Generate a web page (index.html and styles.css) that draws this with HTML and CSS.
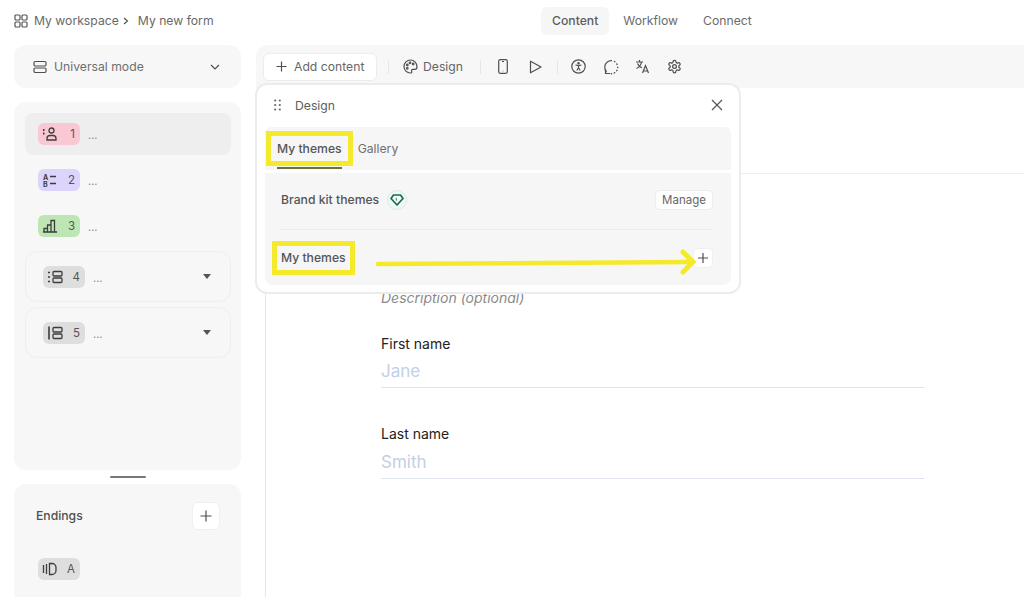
FILE: index.html
```html
<!DOCTYPE html>
<html lang="en">
<head>
  <meta charset="UTF-8">
  <title>My new form</title>
  <meta name="viewport" content="width=device-width, initial-scale=1">
  <link rel="stylesheet" href="styles.css">
</head>
<body>
<header class="topbar">
  <div class="crumbs">
    <svg class="grid-icon" width="14" height="14" viewBox="0 0 14 14"><rect x="1" y="1" width="5" height="5" rx="1"/><rect x="8" y="1" width="5" height="5" rx="1"/><rect x="1" y="8" width="5" height="5" rx="1"/><rect x="8" y="8" width="5" height="5" rx="1"/></svg>
    <span>My workspace</span>
    <svg class="crumb-sep" width="6" height="8" viewBox="0 0 6 8"><path d="M1 1l3.5 3L1 7"/></svg>
    <span class="crumb-form">My new form</span>
  </div>
  <nav class="tabs">
    <a class="tab active">Content</a>
    <a class="tab">Workflow</a>
    <a class="tab">Connect</a>
  </nav>
</header>

<div class="layout">
  <aside class="sidebar">
    <div class="mode-card">
      <svg class="ico" width="14" height="14" viewBox="0 0 14 14"><rect x="1" y="1.5" width="12" height="4.5" rx="1.2"/><rect x="1" y="8" width="12" height="4.5" rx="1.2"/></svg>
      <span class="mode-label">Universal mode</span>
      <svg class="ico chev" width="10" height="6" viewBox="0 0 10 6"><path d="M1 1l4 4 4-4"/></svg>
    </div>

    <div class="questions">
      <div class="q-row selected">
        <span class="badge pink">
          <svg class="ico dark" width="16" height="14" viewBox="0 0 16 14"><circle cx="9.5" cy="3.5" r="2.5"/><path d="M5 13v-1.5C5 9.5 6.500 8.500 8 8.500h3c1.500 0 3 1 3 3V13z"/><path d="M1 3h1.500M1 6.500h1.500" stroke-width="1.800"/></svg>
          <b>1</b>
        </span>
        <span class="dots">...</span>
      </div>
      <div class="q-row">
        <span class="badge purple">
          <svg class="ico dark" width="16" height="14" viewBox="0 0 16 14"><text class="mini" x="1" y="6.5">A</text><text class="mini" x="1" y="13.5">B</text><path d="M8 3.500h6M8 10.500h6"/></svg>
          <b>2</b>
        </span>
        <span class="dots">...</span>
      </div>
      <div class="q-row">
        <span class="badge green">
          <svg class="ico dark" width="16" height="14" viewBox="0 0 16 14"><path d="M1 13h14M2 13V9.500h3.500V13M5.500 13V6H9v7M9 13V1.500h3.500V13"/></svg>
          <b>3</b>
        </span>
        <span class="dots">...</span>
      </div>

      <div class="q-group">
        <span class="badge gray">
          <svg class="ico dark" width="16" height="14" viewBox="0 0 16 14"><rect x="6" y="1.500" width="9" height="4.500" rx="1"/><rect x="6" y="8" width="9" height="4.500" rx="1"/><path d="M1 2.500h2M1 7h2M1 11.500h2" stroke-width="1.600"/></svg>
          <b>4</b>
        </span>
        <span class="dots">...</span>
        <span class="caret"></span>
      </div>
      <div class="q-group">
        <span class="badge gray">
          <svg class="ico dark" width="16" height="14" viewBox="0 0 16 14"><rect x="6" y="1.500" width="9" height="4.500" rx="1"/><rect x="6" y="8" width="9" height="4.500" rx="1"/><path d="M2 .5v13" stroke-width="1.600"/></svg>
          <b>5</b>
        </span>
        <span class="dots">...</span>
        <span class="caret"></span>
      </div>
    </div>

    <div class="handle"></div>

    <div class="endings">
      <div class="endings-head">
        <span class="endings-title">Endings</span>
        <button class="plus-btn big">
          <svg class="ico" width="12" height="12" viewBox="0 0 12 12"><path d="M6 .5v11M.5 6h11"/></svg>
        </button>
      </div>
      <span class="badge gray ending-badge">
        <svg class="ico dark" width="16" height="14" viewBox="0 0 16 14"><path d="M1.500 3v8M4.500 2v10M7.500 1.500H10a4 4 0 014 4v3a4 4 0 01-4 4H7.500z"/></svg>
        <b>A</b>
      </span>
    </div>
  </aside>

  <main class="main">
    <div class="toolbar">
      <button class="add-btn">
        <svg class="ico" width="11" height="11" viewBox="0 0 11 11"><path d="M5.500 .5v10M.5 5.500h10"/></svg>
        Add content
      </button>
      <span class="sep first"></span>
      <span class="tool-design">
        <svg class="ico" width="15" height="15" viewBox="0 0 15 15"><path d="M7.500 1a6.500 6.500 0 000 13c1.200 0 1.600-.9 1.200-1.700-.5-1 .1-2 1.200-2h2c1.300 0 2.100-1 2.100-2.300C14 3.500 11 1 7.500 1z"/><circle cx="4.300" cy="6" r=".8"/><circle cx="7" cy="3.800" r=".8"/><circle cx="10.200" cy="5" r=".8"/><circle cx="4.300" cy="9.300" r=".8"/></svg>
        Design
      </span>
      <span class="sep"></span>
      <svg class="ico t-phone" width="10" height="15" viewBox="0 0 10 15"><rect x=".7" y=".7" width="8.600" height="13.600" rx="1.500"/><path d="M4 2.500h2M5 11.800v.4"/></svg>
      <svg class="ico t-play" width="13" height="14" viewBox="0 0 13 14"><path d="M1.500 1.200v11.600L12 7z" stroke-linejoin="round"/></svg>
      <span class="sep narrow"></span>
      <svg class="ico t-a11y" width="15" height="15" viewBox="0 0 15 15"><circle cx="7.500" cy="7.500" r="6.700"/><circle cx="7.500" cy="4.300" r=".7"/><path d="M4.500 6l3 .7 3-.7M7.500 6.700v2M7.500 8.700L5.800 11.500M7.500 8.700l1.700 2.800"/></svg>
      <svg class="ico t-loop" width="16" height="16" viewBox="0 0 16 16"><path d="M3.500 13C1 10 1.200 5.500 4 3.200 5.500 2 7 1.500 9 1.700"/><path d="M11.500 2.500l.3.2M13.800 5l.2.400M14.700 8.200v.4M13.900 11.300l-.2.4M11.700 13.700l-.4.2M8.600 14.700h-.4" stroke-width="1.400" stroke-linecap="round"/><path d="M2.500 10.500v4h4.500"/></svg>
      <svg class="ico t-lang" width="15" height="15" viewBox="0 0 15 15"><path d="M1 3h7M4.500 1v2M6.500 3C6 6 4 8.500 1.500 9.500M2.500 4.500C3.300 6.500 5 8 7 8.800M7.500 14l3-7.500 3 7.500M8.500 12h4"/></svg>
      <svg class="ico t-gear" width="15" height="15" viewBox="0 0 24 24"><path stroke-width="2" d="M12.220 2h-.44a2 2 0 0 0-2 2v.18a2 2 0 0 1-1 1.730l-.43.25a2 2 0 0 1-2 0l-.15-.08a2 2 0 0 0-2.730.73l-.22.38a2 2 0 0 0 .73 2.730l.15.1a2 2 0 0 1 1 1.720v.51a2 2 0 0 1-1 1.740l-.15.09a2 2 0 0 0-.73 2.730l.22.38a2 2 0 0 0 2.730.73l.15-.08a2 2 0 0 1 2 0l.43.25a2 2 0 0 1 1 1.730V20a2 2 0 0 0 2 2h.44a2 2 0 0 0 2-2v-.18a2 2 0 0 1 1-1.730l.43-.25a2 2 0 0 1 2 0l.15.08a2 2 0 0 0 2.730-.73l.22-.39a2 2 0 0 0-.73-2.730l-.15-.08a2 2 0 0 1-1-1.740v-.5a2 2 0 0 1 1-1.740l.15-.09a2 2 0 0 0 .73-2.730l-.22-.38a2 2 0 0 0-2.730-.73l-.15.08a2 2 0 0 1-2 0l-.43-.25a2 2 0 0 1-1-1.730V4a2 2 0 0 0-2-2z"/><circle stroke-width="2" cx="12" cy="12" r="3"/></svg>
    </div>

    <div class="canvas">
      <div class="canvas-head"></div>
      <form class="form">
        <p class="form-desc">Description (optional)</p>
        <div class="field">
          <label>First name</label>
          <div class="placeholder">Jane</div>
        </div>
        <div class="field">
          <label>Last name</label>
          <div class="placeholder">Smith</div>
        </div>
      </form>
    </div>
  </main>
</div>

<section class="panel">
  <div class="panel-head">
    <svg class="drag" width="7" height="12" viewBox="0 0 7 12"><circle cx="1.200" cy="1.500" r="1.100"/><circle cx="5.800" cy="1.500" r="1.100"/><circle cx="1.200" cy="6" r="1.100"/><circle cx="5.800" cy="6" r="1.100"/><circle cx="1.200" cy="10.500" r="1.100"/><circle cx="5.800" cy="10.500" r="1.100"/></svg>
    <span class="panel-title">Design</span>
    <svg class="ico close" width="12" height="12" viewBox="0 0 12 12"><path d="M1 1l10 10M11 1L1 11"/></svg>
  </div>
  <div class="panel-tabs">
    <span class="panel-tab on"><span class="marked tab-mark">My themes</span></span>
    <span class="panel-tab">Gallery</span>
  </div>
  <div class="panel-body">
    <div class="theme-row brand">
      <span>Brand kit themes</span>
      <span class="gem">
        <svg width="14" height="12" viewBox="0 0 14 12"><path d="M3.500 1h7L13 4.500 7 11 1 4.500z" fill="none" stroke="#1f6a54" stroke-width="1.700" stroke-linejoin="round"/><path d="M6.500 3.500L5.500 5l1.500 2.500z" fill="#1f6a54"/></svg>
      </span>
      <button class="manage">Manage</button>
    </div>
    <div class="theme-row mine">
      <span class="marked row-mark">My themes</span>
      <button class="plus-btn">
        <svg class="ico" width="10" height="10" viewBox="0 0 10 10"><path d="M5 0v10M0 5h10"/></svg>
      </button>
    </div>
  </div>
</section>

<svg class="arrow" width="325" height="30" viewBox="0 0 325 30">
  <path d="M2 17 L316 15" stroke-width="4.500"/>
  <path d="M307 5 L317 15 L307 25" stroke-width="5"/>
</svg>
</body>
</html>
```

FILE: styles.css
```css
* {
  box-sizing: border-box;
}
html, body {
  height: 597px;
  overflow: hidden;
}
body {
  position: relative;
  margin: 0;
  background: #fff;
  color: #5c5c5c;
  font-family: Inter, sans-serif;
  font-size: 12.2px;
}
button {
  font-family: inherit;
  cursor: pointer;
}
.ico {
  fill: none;
  stroke: #4f4f4f;
  stroke-width: 1.2;
  flex: none;
}
.ico.dark {
  stroke: #3d3d3d;
  stroke-width: 1.3;
}
.mini {
  fill: #3d3d3d;
  stroke: none;
  font-size: 7px;
  font-weight: 700;
}

/* top bar */
.topbar {
  display: grid;
  grid-template-columns: 541px auto;
  height: 45px;
  padding-bottom: 3px;
  align-items: center;
}
.crumbs {
  display: flex;
  align-items: center;
  padding: 0 0 1px 14px;
  color: #696969;
}
.grid-icon {
  fill: none;
  stroke: #555;
  stroke-width: 1.2;
  margin-right: 6px;
}
.crumb-sep {
  fill: none;
  stroke: #555;
  stroke-width: 1.2;
  margin-left: 4px;
}
.crumb-form {
  margin-left: 9px;
}
.tabs {
  display: flex;
  gap: 3px;
}
.tab {
  padding: 7px 11px;
  height: 28px;
  line-height: 14px;
  border-radius: 6px;
  color: #6b6b6b;
}
.tab.active {
  background: #f6f6f6;
  color: #5c5c5c;
  font-weight: 500;
}

.layout {
  display: flex;
  height: 552px;
}

/* left column */
.sidebar {
  width: 256px;
  flex: none;
  padding-left: 14px;
  padding-right: 15px;
}
.mode-card {
  display: flex;
  align-items: center;
  height: 43px;
  padding: 0 21px 0 19px;
  background: #f7f7f7;
  border-radius: 12px;
}
.mode-label {
  flex: 1;
  margin-left: 7px;
  color: #6e6e6e;
}
.questions {
  height: 368px;
  margin-top: 14px;
  padding: 11px 10px 11px 11px;
  background: #f7f7f7;
  border-radius: 12px;
}
.q-row {
  display: flex;
  align-items: center;
  height: 42px;
  padding-left: 13px;
  margin-bottom: 4px;
  border-radius: 8px;
}
.q-row.selected {
  background: #eeeeee;
}
.q-group {
  display: flex;
  align-items: center;
  height: 51px;
  padding: 0 19px 0 17px;
  margin-bottom: 5px;
  border: 1px solid #eeeeee;
  border-radius: 12px;
}
.badge {
  display: inline-flex;
  align-items: center;
  justify-content: space-between;
  width: 42px;
  height: 22px;
  padding: 0 5px 0 4px;
  border-radius: 6px;
  flex: none;
}
.badge b {
  font-weight: 400;
  font-size: 11.5px;
  color: #555;
}
.pink { background: #f9c8d4; }
.purple { background: #dcd4fa; }
.green { background: #bde6b4; }
.gray { background: #dedede; }
.dots {
  margin-left: 8px;
  font-size: 11px;
  color: #8a8a8a;
  padding-top: 2px;
}
.caret {
  margin-left: auto;
  width: 0;
  height: 0;
  border-left: 4px solid transparent;
  border-right: 4px solid transparent;
  border-top: 5px solid #555;
}
.handle {
  width: 36px;
  height: 2px;
  margin: 6px auto;
  background: #777;
  border-radius: 2px;
}
.endings {
  height: 140px;
  padding: 18px 21px 0 22px;
  background: #f7f7f7;
  border-radius: 12px;
}
.endings-head {
  display: flex;
  align-items: center;
  justify-content: space-between;
  color: #505050;
  font-weight: 500;
}
.endings-title {
  padding-bottom: 2px;
}
.plus-btn {
  display: flex;
  align-items: center;
  justify-content: center;
  width: 20px;
  height: 20px;
  padding: 0;
  background: #fff;
  border: 1px solid #f0f0f0;
  border-radius: 4px;
}
.plus-btn.big {
  width: 28px;
  height: 28px;
  border-radius: 6px;
}
.ending-badge {
  margin-top: 28px;
  margin-left: 2px;
}

/* main area */
.main {
  flex: 1;
  min-width: 0;
}
.toolbar {
  display: flex;
  align-items: center;
  height: 43px;
  padding-left: 7px;
  background: #f7f7f7;
  border-radius: 12px 0 0 0;
}
.add-btn {
  display: flex;
  align-items: center;
  gap: 7px;
  width: 114px;
  height: 28px;
  padding: 0 0 0 12px;
  background: #fff;
  border: 1px solid #ececec;
  border-radius: 6px;
  color: #666;
  font-size: 12.2px;
}
.sep {
  width: 1px;
  height: 14px;
  margin-left: 17px;
  background: #e6e6e6;
}
.sep.first {
  margin-left: 11px;
}
.sep.narrow {
  margin-left: 15px;
}
.tool-design {
  display: flex;
  align-items: center;
  gap: 5px;
  margin-left: 14px;
  color: #666;
}
.t-phone { margin-left: 17px; }
.t-play { margin-left: 21px; }
.t-a11y { margin-left: 13px; }
.t-loop { margin-left: 17px; }
.t-lang { margin-left: 16px; }
.t-gear { margin-left: 17px; }

.canvas {
  height: 509px;
  margin-left: 9px;
  background: #fff;
  border-left: 1px solid #e8e8e8;
}
.canvas-head {
  height: 86px;
  border-bottom: 1px solid #eeeeee;
}
.form {
  width: 543px;
  margin-left: 115px;
  padding-top: 114px;
}
.form-desc {
  margin: 0;
  font-size: 14px;
  line-height: 20px;
  font-style: italic;
  color: #8a8a8a;
}
.field {
  margin-top: 26px;
  height: 54px;
  border-bottom: 1px solid #dfe3f0;
}
.field + .field {
  margin-top: 36px;
  height: 55px;
}
.field label {
  display: block;
  font-size: 14px;
  line-height: 20px;
  color: #222;
}
.placeholder {
  margin-top: 5px;
  font-size: 17px;
  line-height: 24px;
  color: #c3cfe6;
}
.field + .field .placeholder {
  margin-top: 6px;
}

/* design panel, floats over the canvas */
.panel {
  position: absolute;
  left: 255px;
  top: 83px;
  width: 486px;
  height: 211px;
  padding: 0 8px;
  background: #fff;
  border: 2px solid #ececec;
  border-radius: 12px;
}
.panel-head {
  display: flex;
  align-items: center;
  height: 42px;
  padding: 0 8px 2px 9px;
}
.drag {
  fill: #666;
}
.panel-title {
  margin-left: 14px;
  color: #5c5c5c;
}
.close {
  margin-left: auto;
  stroke: #555;
}
.panel-tabs {
  display: flex;
  align-items: center;
  gap: 16px;
  height: 43px;
  padding-left: 12px;
  background: #f6f6f6;
  border-radius: 6px 6px 0 0;
}
.panel-tab {
  position: relative;
  color: #707070;
}
.panel-tab.on {
  color: #555;
  font-weight: 500;
}
.panel-tab.on::after {
  content: "";
  position: absolute;
  left: 0;
  right: 0;
  bottom: -13px;
  height: 2px;
  background: #6f6f3a;
}
.marked {
  outline: 5px solid #f4ea2b;
  background: #f6f6f6;
}
.tab-mark {
  outline-offset: 5px;
  display: inline-block;
  line-height: 15px;
  padding: 0 1px;
  margin: 0 -1px;
}
.panel-body {
  height: 112px;
  margin-top: 3px;
  padding: 0 18px 0 16px;
  background: #f6f6f6;
  border-radius: 0 0 8px 8px;
}
.theme-row {
  display: flex;
  align-items: center;
  color: #555;
  font-weight: 500;
}
.theme-row.brand {
  height: 57px;
  padding-bottom: 3px;
  border-bottom: 1px solid #ebebeb;
}
.theme-row.mine {
  height: 56px;
  justify-content: space-between;
}
.row-mark {
  outline-offset: 4px;
  line-height: 16px;
}
.gem {
  display: flex;
  align-items: center;
  justify-content: center;
  width: 20px;
  height: 20px;
  margin-left: 8px;
  background: #eef9f5;
  border: 1px solid #d5ece4;
  border-radius: 50%;
}
.manage {
  margin-left: auto;
  width: 58px;
  height: 20px;
  padding: 0;
  background: #fff;
  border: 1px solid #ececec;
  border-radius: 4px;
  color: #666;
  font-size: 11.5px;
}

/* yellow annotation arrow */
.arrow {
  position: absolute;
  left: 376px;
  top: 247px;
  fill: none;
  stroke: #f4ea2b;
  stroke-linecap: round;
}
```
